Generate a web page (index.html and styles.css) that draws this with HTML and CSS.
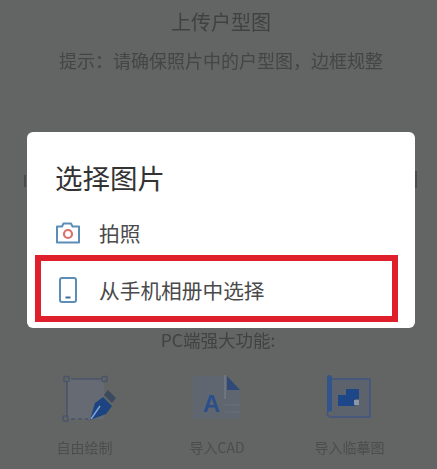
FILE: index.html
```html
<!DOCTYPE html>
<html lang="zh">
<head>
<meta charset="utf-8">
<title>选择图片</title>
<link rel="stylesheet" href="styles.css">
</head>
<body>
<div class="page">
  <h1 class="title">上传户型图</h1>
  <p class="hint">提示&#xFF1A;请确保照片中的户型图&#xFF0C;边框规整</p>
  <p class="pc">PC端强大功能:</p>
  <div class="features">
    <div class="feature">
      <svg class="ficon ficon-draw" viewBox="0 0 54 48" width="54" height="48">
        <path d="M5 4H42V44H5Z" fill="#666a72"/>
        <g fill="none" stroke="#4a5568" stroke-width="1.600">
          <path d="M5 7V41M9 4H40"/>
          <path d="M9 44H26" stroke-dasharray="4 3"/>
          <rect x="2" y="1.500" width="5" height="5" rx="1"/>
          <rect x="40" y="1.500" width="5" height="5" rx="1"/>
          <rect x="1" y="41" width="5" height="5" rx="1"/>
        </g>
        <path d="M28 45 L33 28 L41 22 L50 31 L44 39 Z" fill="#1d4480"/>
        <path d="M42 20 L46 15 L54 23 L50 28 Z" fill="#3b4a5e"/>
        <path d="M29 44 L38 31" stroke="#7ba4d8" stroke-width="1.500"/>
      </svg>
      <span class="flabel">自由绘制</span>
    </div>
    <div class="feature">
      <svg class="ficon" viewBox="0 0 54 48" width="54" height="48">
        <path d="M3 1H37L50 15V44H3Z" fill="#5f6670"/>
        <path d="M37 1L50 15H37Z" fill="#2f4a78"/>
        <path d="M35 0V24" stroke="#727c84" stroke-width="1.500"/>
        <path d="M35 30H50M35 37H50" stroke="#687276" stroke-width="1"/>
        <text x="13" y="37" class="cad-a">A</text>
      </svg>
      <span class="flabel">导入CAD</span>
    </div>
    <div class="feature">
      <svg class="ficon ficon-copy" viewBox="0 0 54 48" width="54" height="48">
        <path d="M10 4H49V42H10" fill="#5d636c" stroke="#47587a" stroke-width="2"/>
        <path d="M6 3Q6 0 8.500 0Q11 0 11 3V36Q7 36 6 40Z" fill="#33548a"/>
        <path d="M6 39Q7 42 11 42" fill="none" stroke="#47587a" stroke-width="2"/>
        <path d="M17 31V20H25V14H38V24H34V31Z" fill="#1d4788"/>
        <rect x="33" y="25" width="5" height="5" fill="#8b97a8"/>
      </svg>
      <span class="flabel">导入临摹图</span>
    </div>
  </div>
</div>
<div class="edge edge-left"></div>
<div class="edge edge-right"></div>
<div class="dialog">
  <h2 class="dialog-title">选择图片</h2>
  <div class="option option-camera">
    <svg class="oicon" viewBox="0 0 26 24" width="26" height="24">
      <path d="M3 5.500H8L9.500 2.500H17L18.500 5.500H25V21.500H3Z" fill="none" stroke="#5b8db8" stroke-width="2" stroke-linejoin="round"/>
      <circle cx="14" cy="13" r="4" fill="none" stroke="#d9706e" stroke-width="2.200"/>
    </svg>
    <span class="otext">拍照</span>
  </div>
  <div class="option option-phone">
    <svg class="oicon" viewBox="0 0 26 28" width="26" height="28">
      <rect x="6" y="2" width="16" height="24" rx="2" fill="none" stroke="#5b8db8" stroke-width="2"/>
      <rect x="11.500" y="20.500" width="5" height="2" fill="#3f6f9c"/>
    </svg>
    <span class="otext">从手机相册中选择</span>
  </div>
</div>
</body>
</html>
```
FILE: styles.css
```css
* { box-sizing: border-box; }
html, body { margin: 0; height: 100%; }
body {
  position: relative;
  width: 437px;
  height: 469px;
  overflow: hidden;
  background: #636464;
  font-family: "Noto Sans CJK SC", "Liberation Sans", sans-serif;
}
.page {
  display: flex;
  flex-direction: column;
  align-items: center;
  height: 469px;
  padding-top: 8px;
  filter: blur(0.7px);
}
.title {
  margin: 0 0 0 5px;
  font-size: 20px;
  line-height: 28px;
  font-weight: 400;
  color: #404241;
}
.hint {
  margin: 10px 0 0 5px;
  font-size: 18px;
  line-height: 28px;
  color: #444645;
}
.pc {
  margin: 254px 0 0 -1px;
  font-size: 17.500px;
  line-height: 24px;
  color: #414241;
}
.features {
  display: grid;
  grid-template-columns: repeat(3, 132.500px);
  margin-top: 23px;
  margin-right: 3px;
}
.feature {
  display: flex;
  flex-direction: column;
  align-items: center;
  gap: 14px;
}
.ficon { display: block; }
.ficon-draw { margin-left: 8px; }
.ficon-copy { margin-right: 4px; }
.cad-a {
  font-family: "Liberation Sans", sans-serif;
  font-size: 24px;
  font-weight: 700;
  fill: #2a4f8a;
}
.flabel {
  font-size: 14px;
  line-height: 20px;
  color: #4c4e4e;
}
.edge {
  position: absolute;
  width: 2px;
  background: #4a4b4b;
}
.edge-left { left: 24px; top: 175px; height: 12px; }
.edge-right { left: 415px; top: 171px; height: 17px; }
.dialog {
  position: absolute;
  left: 27px;
  top: 132px;
  width: 388px;
  height: 196px;
  padding: 24px 17px 6px 8px;
  background: #fff;
  border-radius: 6px;
  display: flex;
  flex-direction: column;
}
.dialog-title {
  margin: 0 0 0 20px;
  font-size: 27.500px;
  line-height: 42px;
  font-weight: 400;
  color: #333;
}
.option {
  display: flex;
  align-items: center;
  gap: 19px;
}
.option-camera {
  height: 57px;
  padding-top: 13px;
  padding-left: 19px;
}
.option-phone {
  height: 67px;
  padding-top: 2px;
  padding-left: 13px;
  border: 6px solid #e01f2d;
}
.oicon { display: block; flex: none; }
.otext {
  font-size: 20.700px;
  line-height: 28px;
  color: #4a4a4a;
}
```
